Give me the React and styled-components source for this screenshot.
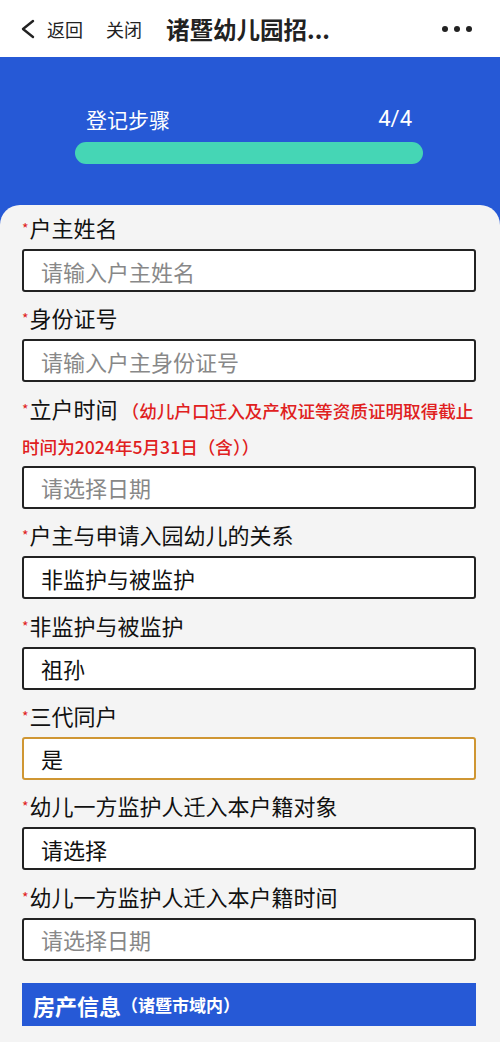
import React from 'react'
import styled, { createGlobalStyle } from 'styled-components';

const GlobalStyle = createGlobalStyle`
    * { box-sizing: border-box; }
    body {
        margin: 0;
        background: #f4f4f4;
        font-family: "Noto Sans CJK SC", "Noto Sans", sans-serif;
        -webkit-font-smoothing: antialiased;
    }
`

const fields = [
    { label: '户主姓名', placeholder: '请输入户主姓名' },
    { label: '身份证号', placeholder: '请输入户主身份证号' },
    { label: '立户时间', note: '（幼儿户口迁入及产权证等资质证明取得截止时间为2024年5月31日（含））', placeholder: '请选择日期' },
    { label: '户主与申请入园幼儿的关系', value: '非监护与被监护' },
    { label: '非监护与被监护', value: '祖孙' },
    { label: '三代同户', value: '是', active: true },
    { label: '幼儿一方监护人迁入本户籍对象', value: '请选择' },
    { label: '幼儿一方监护人迁入本户籍时间', placeholder: '请选择日期' },
];

const App = () => {
    return (
        <Wrapper>
            <GlobalStyle />
            <TopBar>
                <BackIcon viewBox="0 0 16 20">
                    <path d="M13 2 L3 10 L13 18" fill="none" stroke="#222" strokeWidth="2.4" strokeLinecap="round" strokeLinejoin="round" />
                </BackIcon>
                <NavText>返回</NavText>
                <NavText className='close'>关闭</NavText>
                <Title>诸暨幼儿园招...</Title>
                <Dots>
                    <span /><span /><span />
                </Dots>
            </TopBar>
            <Main>
                <Steps>
                    <StepRow>
                        <span>登记步骤</span>
                        <StepCount>4/4</StepCount>
                    </StepRow>
                    <Progress />
                </Steps>
                <Card>
                    {fields.map((f) => (
                        <Field key={f.label}>
                            <Label>
                                <Star>*</Star>{f.label}
                                {f.note && <Note>{f.note}</Note>}
                            </Label>
                            <InputBox $active={f.active}>
                                {f.value ? <Value>{f.value}</Value> : <Placeholder>{f.placeholder}</Placeholder>}
                            </InputBox>
                        </Field>
                    ))}
                    <Section>
                        房产信息<small>（诸暨市域内）</small>
                    </Section>
                </Card>
            </Main>
        </Wrapper>
    )
}

const Wrapper = styled.div`
    width: 500px;
    min-height: 1042px;
    background: #f4f4f4;
`

const TopBar = styled.div`
    height: 57px;
    background: #fff;
    display: flex;
    align-items: center;
    padding: 0 0 0 20px;
    color: #222;
`

const BackIcon = styled.svg`
    width: 16px;
    height: 20px;
    margin-right: 11px;
`

const NavText = styled.span`
    font-size: 18px;
    line-height: 24px;
    color: #222;
    &.close {
        margin-left: 23px;
    }
`

const Title = styled.span`
    font-size: 23.5px;
    font-weight: 700;
    margin-left: 24px;
    color: #222;
    flex: 1;
`

const Dots = styled.div`
    display: flex;
    gap: 6px;
    margin-right: 28px;
    span {
        width: 6px;
        height: 6px;
        border-radius: 50%;
        background: #222;
    }
`

const Main = styled.div`
    background: #2659d6;
`

const Steps = styled.div`
    padding: 50px 77px 41px 75px;
`

const StepRow = styled.div`
    display: flex;
    justify-content: space-between;
    padding: 0 11px;
    color: #fff;
    font-size: 21px;
    line-height: 24px;
`

const StepCount = styled.span`
    font-family: Roboto, "Noto Sans", sans-serif;
    font-size: 22px;
`

const Progress = styled.div`
    margin-top: 11px;
    height: 22px;
    border-radius: 11px;
    background: #45d6b5;
`

const Card = styled.div`
    background: #f4f4f4;
    border-radius: 20px 20px 0 0;
    padding: 4px 24px 16px 22px;
    display: flex;
    flex-direction: column;
    gap: 7.4px;
`

const Field = styled.div`
    display: flex;
    flex-direction: column;
`

const Label = styled.div`
    font-size: 22px;
    line-height: 36px;
    color: #111;
    margin-bottom: 4px;
`

const Star = styled.span`
    color: #e02020;
    font-size: 14px;
    line-height: 0;
    vertical-align: 3px;
    margin-right: 1px;
`

const Note = styled.span`
    color: #e02020;
    font-size: 17.6px;
    line-height: 0;
    font-weight: 500;
    margin-left: 4px;
`

const InputBox = styled.div`
    height: 43px;
    border: 2px solid ${(p) => (p.$active ? '#cf9633' : '#222')};
    border-radius: 3px;
    background: #fff;
    display: flex;
    align-items: center;
    padding-left: 17px;
    font-size: 22px;
`

const Placeholder = styled.span`
    color: #888;
`

const Value = styled.span`
    color: #111;
`

const Section = styled.div`
    margin-top: 15px;
    height: 43px;
    background: #2659d6;
    color: #fff;
    font-size: 22px;
    font-weight: 700;
    display: flex;
    align-items: center;
    padding-left: 11px;
    small {
        font-size: 17px;
        font-weight: 700;
    }
`

export default App;
